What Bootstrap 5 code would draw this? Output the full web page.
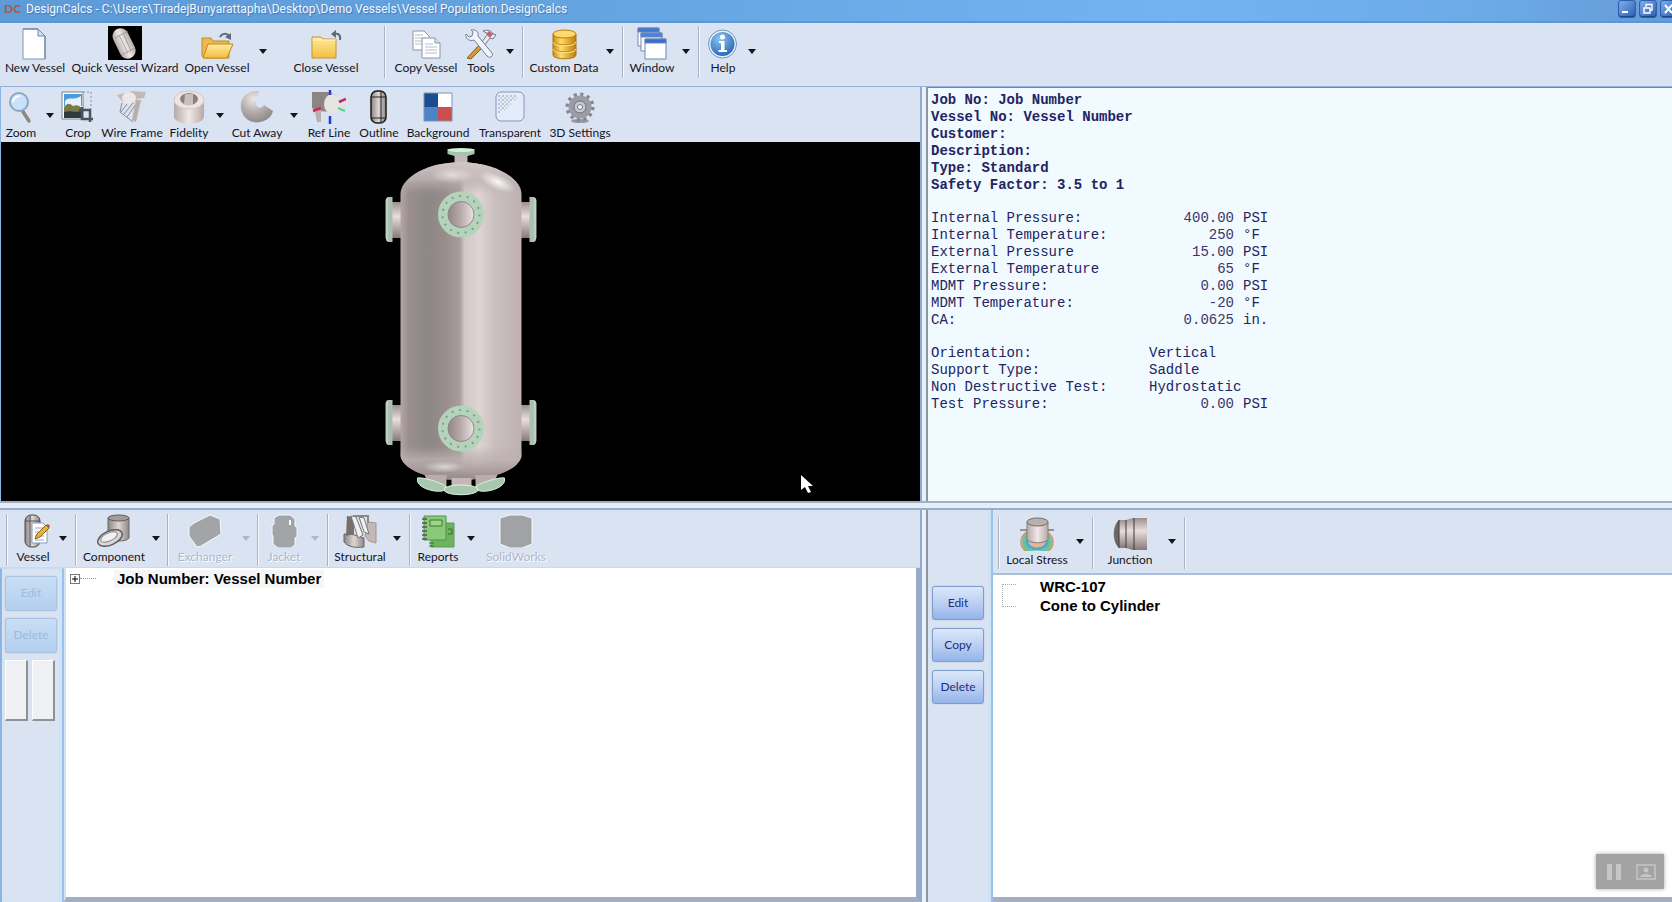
<!DOCTYPE html>
<html lang="en">
<head>
<meta charset="utf-8">
<meta name="viewport" content="width=device-width, initial-scale=1">
<title>DesignCalcs</title>
<link href="https://cdn.jsdelivr.net/npm/bootstrap@5.3.0/dist/css/bootstrap.min.css" rel="stylesheet">
<style>
  :root { --face: #dae3f1; --edge: #8eb4e3; --ink: #14141e; }
  body { font-family: Lato, "Liberation Sans", sans-serif; font-size: 12px; line-height: 14px; color: var(--ink); background: var(--face); }
  button { font: inherit; color: inherit; }

  .titlebar { height: 23px; padding-bottom: 3px; background: linear-gradient(90deg, #5d9ad8 0, #64a4e0 35%, #72b3f2 70%, #6cabe8 88%, #659bd6 100%); border-bottom: 2px solid #5b97d6; color: #f2f8ff; }
  .app-mark { width: 18px; font-weight: 900; font-size: 12px; color: #a0604c; }
  .win-title { font-family: Roboto, "Liberation Sans", sans-serif; text-shadow: 1px 1px 1px #3f78b8; }
  .win-btns { width: 54px; gap: 3px; }
  .win-btn { flex: none; width: 18px; height: 18px; border: 1px solid #2f5fae; border-radius: 3px; background: linear-gradient(135deg, #7fb0ea, #2c5cb4); box-shadow: inset 0 -1px 1px #173f8e; }

  .tools { display: grid; align-items: start; justify-content: start; background: var(--face); }
  .tools-main { height: 63px; padding: 2px 0 0 1px; border-top: 1px solid #cfeaf8;
    grid-template-columns: 68px 112px 72px 20px 106px 12px 70px 40px 18px 8px 74px 18px 8px 50px 18px 8px 40px 18px; }
  .tools-view { height: 55px; padding: 3px 0 0 0;
    grid-template-columns: 40px 18px 38px 70px 44px 18px 56px 18px 52px 48px 70px 74px 66px; }
  .tools-vessel { height: 58px; padding: 4px 0 0 2px; border-bottom: 1px solid #c3dcf4;
    grid-template-columns: 10px 42px 18px 8px 68px 16px 8px 66px 16px 8px 44px 18px 8px 56px 18px 8px 48px 18px 72px; }
  .tools-local { height: 65px; padding: 7px 0 0 2px; border-bottom: 2px solid #a9bfdc;
    grid-template-columns: 8px 68px 18px 8px 66px 18px 8px; }
  .tool { display: flex; flex-direction: column; align-items: center; gap: 2px; padding: 0; border: 0; background: none; white-space: nowrap; }
  .tools-main .tool { gap: 1px; }
  .tool svg { width: 34px; height: 34px; display: block; }
  .tool:disabled, .drop:disabled { color: #adb8ca; text-shadow: 1px 1px 0 #fff; }
  .drop { align-self: start; height: 50px; padding: 0; border: 0; background: none; display: grid; place-items: center; }
  .drop::after { content: ""; border: 4px solid transparent; border-top: 5px solid currentColor; border-bottom: 0; }
  .rule { justify-self: center; width: 2px; height: 52px; border-left: 1px solid #a9b3c4; border-right: 1px solid #f4f8fd; }

  .upper, .lower { display: grid; grid-template-columns: 920fr 8px 744fr; min-height: 0; }
  .upper { flex: 415 1 0; border-top: 1px solid #93b3dc; }
  .lower { flex: 393 1 0; border-top: 2px solid #98aeca; }
  .h-split { height: 7px; border-top: 2px solid #a6afbd; background: #e4edf8; }
  .v-split { border-left: 2px solid #8caad3; border-right: 2px solid #8c95a5; background: #e8f0fa; }
  .view-pane { border-left: 1px solid var(--edge); }
  .scene { background: #000; min-height: 0; overflow: hidden; }
  .scene .pointer { position: absolute; right: 106px; bottom: 7px; width: 14px; height: 20px; }
  .report { background: #f0faff; border-top: 1px solid #7d8590; color: #23235f; font-family: "Liberation Mono", monospace; font-size: 14px; line-height: 17px; padding: 4px 3px; overflow: hidden; }
  .report p { margin: 0; font-weight: 700; }
  .report td { padding: 0; height: 17px; white-space: pre; }
  .report .c-name { width: 218px; }
  .report .c-value { width: 85px; }
  .report .num { text-align: right; color: #40336a; }
  .report .unit { padding-left: 9px; }
  .spaced { margin-top: 16px; }

  .side { width: 64px; border-right: 2px solid #9bc0ec; box-shadow: inset -3px 0 2px #cfe3f8; }
  .side-l { padding: 7px 0 0 3px; border-top: 1px solid #c3dcf4; gap: 7px; border-left: 2px solid var(--edge); }
  .side-r { width: 65px; padding: 76px 0 0 4px; gap: 8px; }
  .cmd { width: 52px; height: 35px; padding: 0; border: 1px solid #7f9dc9; border-radius: 3px; color: #1d2f7a; background: linear-gradient(#dbe7fb 0, #bcd0f3 50%, #94b4ea 100%); box-shadow: 0 0 1px #6f8dbb; }
  .cmd:disabled { color: #9dbbdf; border-color: #a9c3e4; background: linear-gradient(#c9def5, #b3cfef); }
  .side-r .cmd { height: 34px; }
  .blank { width: 23px; height: 61px; padding: 0; background: #f0f1f4; border: 1px solid #fff; border-right: 2px solid #8e9196; border-bottom: 2px solid #8e9196; }
  .tree { background: #fff; font-family: "Liberation Sans", sans-serif; font-size: 15px; line-height: 18px; font-weight: 700; color: #000; border-bottom: 5px solid #a3b0c4; }
  .tree-l { border-left: 2px solid #cfe3f8; border-right: 4px solid #98abc6; padding: 2px 0 0 4px; }
  .tree-r { padding: 2px 0 0 9px; line-height: 19px; }
  .expander { width: 10px; height: 10px; padding: 0; border: 1px solid #777; background: #fff; display: grid; place-items: center; }
  .expander svg { width: 8px; height: 8px; }
  .twig { width: 16px; margin-right: 18px; border-top: 1px dotted #999; }
  .fork { width: 14px; height: 23px; margin-top: 7px; border: 1px dotted #aaa; border-right: 0; }
  .node-name { background: #f6f6f7; padding: 0 3px; }
  .recorder { position: fixed; right: 8px; bottom: 13px; width: 68px; height: 35px; background: #a3a3a3; box-shadow: 0 0 4px #aaa; }
  .recorder button { border: 0; padding: 0; background: none; width: 28px; height: 24px; }
</style>
</head>
<body>
<svg width="0" height="0" class="position-absolute" aria-hidden="true">
  <defs>
    <linearGradient id="steel"><stop offset="0" stop-color="#8a8585"/><stop offset=".5" stop-color="#ddd6d5"/><stop offset="1" stop-color="#8f8886"/></linearGradient>
    <linearGradient id="pale"><stop offset="0" stop-color="#b5aaa8"/><stop offset=".5" stop-color="#f0e8e6"/><stop offset="1" stop-color="#b5aaa8"/></linearGradient>
    <linearGradient id="pipe" x2="0" y2="1"><stop offset="0" stop-color="#9b8f8f"/><stop offset=".4" stop-color="#e9dede"/><stop offset="1" stop-color="#857979"/></linearGradient>
    <linearGradient id="gold"><stop offset="0" stop-color="#c98b12"/><stop offset=".35" stop-color="#ffdc6a"/><stop offset="1" stop-color="#c07c08"/></linearGradient>
    <linearGradient id="folder" x2="0" y2="1"><stop offset="0" stop-color="#ffeb9c"/><stop offset="1" stop-color="#f5bd42"/></linearGradient>
    <radialGradient id="orb" cx=".4" cy=".3" r=".8"><stop offset="0" stop-color="#8fc6f5"/><stop offset="1" stop-color="#175aa8"/></radialGradient>
    <radialGradient id="ball" cx=".4" cy=".25" r=".8"><stop offset="0" stop-color="#eeeae9"/><stop offset=".5" stop-color="#b5afae"/><stop offset="1" stop-color="#8b8584"/></radialGradient>
    <linearGradient id="shell"><stop offset="0" stop-color="#b3a6a6"/><stop offset=".07" stop-color="#9a8e8e"/><stop offset=".22" stop-color="#8d8788"/><stop offset=".36" stop-color="#968c8b"/><stop offset=".49" stop-color="#a89d9c"/><stop offset=".53" stop-color="#d2c8c7"/><stop offset=".65" stop-color="#ded4d3"/><stop offset=".78" stop-color="#cabfbf"/><stop offset="1" stop-color="#bfb1b1"/></linearGradient>
    <linearGradient id="headfade" x2="0" y2="1"><stop offset="0" stop-color="#d3c7c7"/><stop offset=".55" stop-color="#c0b4b4" stop-opacity=".8"/><stop offset="1" stop-color="#b0a4a4" stop-opacity="0"/></linearGradient>
    <linearGradient id="footfade" x2="0" y2="1"><stop offset="0" stop-color="#b5a9a9" stop-opacity="0"/><stop offset=".4" stop-color="#bdb1b1" stop-opacity=".8"/><stop offset="1" stop-color="#948888"/></linearGradient>
    <radialGradient id="shine"><stop offset="0" stop-color="#fff" stop-opacity=".9"/><stop offset="1" stop-color="#fff" stop-opacity="0"/></radialGradient>
    <linearGradient id="bore"><stop offset="0" stop-color="#918786"/><stop offset=".5" stop-color="#b8acab"/><stop offset="1" stop-color="#eee4e3"/></linearGradient>
  </defs>
</svg>

<div class="vh-100 d-flex flex-column overflow-hidden">
  <header class="titlebar d-flex align-items-center flex-shrink-0 ps-1">
    <span class="app-mark me-1" aria-hidden="true">DC</span>
    <span class="win-title text-nowrap flex-grow-1">DesignCalcs - C:\Users\TiradejBunyarattapha\Desktop\Demo Vessels\Vessel Population.DesignCalcs</span>
    <div class="win-btns d-flex flex-shrink-0 overflow-hidden">
      <button class="win-btn p-0" aria-label="Minimize"><svg width="12" height="12" viewBox="0 0 12 12" class="d-block mx-auto"><path d="M1 9h6" stroke="#fff" stroke-width="2"/></svg></button>
      <button class="win-btn p-0" aria-label="Restore"><svg width="12" height="12" viewBox="0 0 12 12" class="d-block mx-auto" fill="none" stroke="#fff" stroke-width="1.4"><path d="M4 4V1.500h6V7H8"/><path d="M2 5h6v5H2z"/></svg></button>
      <button class="win-btn p-0" aria-label="Close"><svg width="12" height="12" viewBox="0 0 12 12" class="d-block mx-auto"><path d="M2 2l7 8M9 2L2 10" stroke="#fff" stroke-width="2"/></svg></button>
    </div>
  </header>

  <nav class="tools tools-main flex-shrink-0" aria-label="Main">
    <button class="tool"><svg viewBox="0 0 34 34"><path d="M5 3h15l7 7v23H5z" fill="#fff" stroke="#7f94b5"/><path d="M5 3h15l7 7v23" fill="none" stroke="#5e7699"/><path d="M20 3v7h7z" fill="#cfe0f2" stroke="#7188ab"/></svg>New Vessel</button>
    <button class="tool"><svg viewBox="0 0 34 34"><path d="M0 0h34v34H0z"/><rect x="8" y="1" width="16" height="32" rx="8" transform="rotate(-26 17 17)" fill="url(#pale)"/><path d="M7 12l13-7M14 29l13-7M15 7l8 18M11 9l9 18" stroke="#8b8b8b" stroke-opacity=".7" fill="none"/></svg>Quick Vessel Wizard</button>
    <button class="tool"><svg viewBox="0 0 34 34"><path d="M2 12h9l2 3h16v17H4L2 30z" fill="#eeb850" stroke="#c08a24"/><path d="M8 18h25l-6 14H3z" fill="url(#folder)" stroke="#c08a24"/><path d="M20 11c2-4 7-4 9-1" fill="none" stroke="#5d6a7c" stroke-width="2"/><path d="M31 7v7l-6-3z" fill="#5d6a7c"/></svg>Open Vessel</button>
    <button class="drop" aria-label="Open Vessel options"></button>
    <button class="tool"><svg viewBox="0 0 34 34"><path d="M3 11h9l2 2h13v19H3z" fill="url(#folder)" stroke="#c29334"/><path d="M3 14h24" stroke="#fff3bd"/><path d="M31 14c1-5-2-7-5-6" fill="none" stroke="#5d6a7c" stroke-width="2"/><path d="M27 4v8l-5-4z" fill="#5d6a7c"/></svg>Close Vessel</button>
    <span class="rule"></span>
    <button class="tool"><svg viewBox="0 0 34 34" stroke="#8a96a8" fill="#fff"><path d="M4 5h11l5 5v14H4z"/><path d="M6 9h8M6 12h11M6 15h11M6 18h11" stroke="#b3bcc9"/><path d="M13 12h13l5 5v15H13z"/><path d="M26 12v5h5" fill="#dfe6ef"/><path d="M16 18h8M16 21h12M16 24h12M16 27h12" stroke="#b3bcc9"/></svg>Copy Vessel</button>
    <button class="tool"><svg viewBox="0 0 34 34"><path d="M3 32L17 17l3 3L7 33z" fill="#d59a35" stroke="#8d6018"/><path d="M17 17l7-9-5-3c5-2 9 0 10 3l3 1-3 4-3-1-6 8z" fill="#e8ecf2" stroke="#6f7c90"/><path d="M22 8l3-3 4 3-3 4z" fill="#c5606a"/><path d="M2 8l3 3 3-1 1-4-2-2c5-1 8 2 7 6l14 17c2 3-2 6-5 3L10 14C5 16 1 12 2 8z" fill="#f0f4f9" stroke="#718097"/></svg>Tools</button>
    <button class="drop" aria-label="Tools options"></button>
    <span class="rule"></span>
    <button class="tool"><svg viewBox="0 0 34 34"><path d="M6 8v21c0 5 23 5 23 0V8z" fill="url(#gold)" stroke="#ad7310"/><ellipse cx="17.500" cy="8" rx="11.500" ry="4" fill="#ffd96b" stroke="#b97e17"/><path d="M6 15c0 5 23 5 23 0M6 22c0 5 23 5 23 0" fill="none" stroke="#c08420"/><path d="M6 16c0 5 23 5 23 0M6 23c0 5 23 5 23 0" fill="none" stroke="#ffe58f"/></svg>Custom Data</button>
    <button class="drop" aria-label="Custom Data options"></button>
    <span class="rule"></span>
    <button class="tool"><svg viewBox="0 0 34 34" fill="#fff" stroke="#6f87b7"><path d="M3 2h21v18H3z"/><path d="M3 2h21v4H3z" fill="#3f77d2"/><path d="M6 7h21v18H6z"/><path d="M6 7h21v4H6z" fill="#4a82da"/><path d="M10 13h21v20H10z"/><path d="M10 13h21v4H10z" fill="#356dcc"/></svg>Window</button>
    <button class="drop" aria-label="Window options"></button>
    <span class="rule"></span>
    <button class="tool"><svg viewBox="0 0 34 34"><circle cx="16.500" cy="18" r="13" fill="url(#orb)" stroke="#e9f2fb" stroke-width="2"/><circle cx="16.500" cy="18" r="14" fill="none" stroke="#6c94c4"/><circle cx="16.500" cy="11" r="2.500" fill="#fff"/><path d="M13 15h5.500v9H21v2h-8.500v-2h2.500v-7h-2z" fill="#fff"/></svg>Help</button>
    <button class="drop" aria-label="Help options"></button>
  </nav>

  <main class="flex-grow-1 d-flex flex-column overflow-hidden">
    <div class="upper">
      <section class="view-pane d-flex flex-column overflow-hidden">
        <div class="tools tools-view flex-shrink-0" role="toolbar" aria-label="View">
          <button class="tool"><svg viewBox="0 0 34 34"><path d="M18 20l7 11" stroke="#8d8882" stroke-width="3.500" stroke-linecap="round"/><circle cx="15" cy="12" r="9" fill="#c9e2fa" stroke="#8ea6c4" stroke-width="2"/><path d="M9 12c0-4 4-6 7-6" stroke="#fff" stroke-width="2" fill="none"/></svg>Zoom</button>
          <button class="drop" aria-label="Zoom options"></button>
          <button class="tool"><svg viewBox="0 0 34 34"><path d="M1 2h21v27H1z" fill="#fff" stroke="#77828f"/><path d="M3 4h18v12H3z" fill="#4c9bdd"/><path d="M4 11c4-5 8 0 16-5v10H4z" fill="#e7f2fa"/><path d="M3 17c4-4 5-4 9-1 4-2 7 0 9 2v9H3z" fill="#7c7a4d"/><path d="M3 22c6-2 10 1 18-1v7H3z" fill="#2e3b3c"/><path d="M22 2h8v17" fill="none" stroke="#8591a2" stroke-dasharray="2 2"/><path d="M21 17v12h11M18 20h11v12" fill="none" stroke="#49525f" stroke-width="2.500"/></svg>Crop</button>
          <button class="tool"><svg viewBox="0 0 34 34"><path d="M2 5l8-2 8-2 13 1-2 6-7 1-4 5-11-3z" fill="#c0b9b8"/><ellipse cx="14" cy="8" rx="7" ry="6" fill="#ece8e7"/><path d="M7 13L5 22l13 10M12 14L6 22M18 13L9 24M23 11L12 27" fill="none" stroke="#8f8989"/><path d="M21 10h5l-5 22-4-2z" fill="#b6afae"/></svg>Wire Frame</button>
          <button class="tool"><svg viewBox="0 0 34 34"><path d="M2 10v17c2 9 29 9 30 0V10z" fill="url(#pale)"/><ellipse cx="17" cy="10" rx="15" ry="9" fill="#eee4e2" stroke="#d3c9c7"/><ellipse cx="17" cy="9" rx="9" ry="6" fill="#8b7e7d"/><path d="M13 4l-1 10c3 2 6 2 9 0V4z" fill="#c9bfbe"/></svg>Fidelity</button>
          <button class="drop" aria-label="Fidelity options"></button>
          <button class="tool"><svg viewBox="0 0 34 34"><path d="M15 1C5 2 0 10 1 18c1 10 10 16 19 14 7-1 12-6 13-11l-9-6c-4 5-9 2-8-3 0-4 2-7 3-11z" fill="url(#ball)"/></svg>Cut Away</button>
          <button class="drop" aria-label="Cut Away options"></button>
          <button class="tool"><svg viewBox="0 0 34 34"><path d="M0 2h17l8 4-5 16-14-1-6-3z" fill="#8d8583"/><path d="M3 22l6-4v14H5z" fill="#b9afad"/><ellipse cx="20" cy="14" rx="8" ry="10" fill="#e7e4e4"/><path d="M18 0v5M18 26v8" stroke="#2b3ad0" stroke-width="2.500"/><path d="M1 21l8-3M27 12l7-3" stroke="#cf2552" stroke-width="2.500"/><path d="M26 18l7 3" stroke="#61d37a" stroke-width="2"/></svg>Ref Line</button>
          <button class="tool"><svg viewBox="0 0 34 34"><rect x="9" y="1" width="15" height="32" rx="6" fill="url(#steel)" stroke="#1b1b1b" stroke-width="1.500"/><path d="M9 7h15M9 28h15M19 1v32" stroke="#222" fill="none"/></svg>Outline</button>
          <button class="tool"><svg viewBox="0 0 34 34"><path d="M3 3h14v14H3z" fill="#1d4c92"/><path d="M17 3h14v14H17z" fill="#fff"/><path d="M3 17h14v14H3z" fill="#4a86c6"/><path d="M17 17h14v14H17z" fill="#c9504f"/><path d="M3 3h28v28H3z" fill="none" stroke="#7d93b3"/></svg>Background</button>
          <button class="tool"><svg viewBox="0 0 34 34"><rect x="3" y="2" width="28" height="29" rx="5" fill="#e4ecfa" stroke="#8296bb"/><path d="M5 6h20M5 10h17M5 14h13M5 18h9M5 22h4" stroke="#bcc5d3" stroke-width="2" stroke-dasharray="2 2"/><path d="M7 8h17M7 12h12M7 16h9M7 20h5" stroke="#c8d0dc" stroke-width="2" stroke-dasharray="2 2"/></svg>Transparent</button>
          <button class="tool"><svg viewBox="0 0 34 34"><ellipse cx="17" cy="31" rx="9" ry="2" fill="#9298a4"/><circle cx="17" cy="17" r="12.500" fill="none" stroke="#85858f" stroke-width="4" stroke-dasharray="3 3.540"/><circle cx="17" cy="17" r="8.500" fill="none" stroke="#9c9ca7" stroke-width="6"/><circle cx="17" cy="17" r="6" fill="#c5c7d1" stroke="#6f707c"/><circle cx="17" cy="17" r="2.500" fill="#f2f4f8" stroke="#777985"/></svg>3D Settings</button>
        </div>
        <div class="scene flex-grow-1 position-relative">
          <svg class="d-block w-100 h-100" viewBox="0 2 180 359" role="img" aria-label="Vertical pressure vessel">
            <path d="M84 12h13v14H84z" fill="#c5b9b8"/>
            <path d="M77 9h27v5l-7 2H84l-7-2z" fill="#a8c4ae"/><ellipse cx="90.500" cy="10" rx="13" ry="2" fill="#d4f0d9"/>
            <g id="nozzleL"><path d="M20 62h13v36H20z" fill="url(#pipe)"/><path d="M15 60l2-3h5v45h-5l-2-4z" fill="#aebfb1"/><path d="M16.500 58v43" stroke="#cfe9d4"/></g>
            <use href="#nozzleL" y="203"/>
            <use href="#nozzleL" transform="translate(181 0) scale(-1 1)"/>
            <use href="#nozzleL" transform="translate(181 203) scale(-1 1)"/>
            <path id="body" d="M30 54c0-13 20-31 60-32 40 1 61 19 61 32v262c-2 12-25 24-61 24s-58-12-60-24z" fill="url(#shell)"/>
            <path d="M30 54c0-13 20-31 60-32 40 1 61 19 61 32z" fill="url(#headfade)"/>
            <path d="M30 306v10c2 12 24 24 60 24s59-12 61-24v-10z" fill="url(#footfade)"/>
            <ellipse cx="82" cy="35" rx="22" ry="8" fill="url(#shine)" opacity=".6"/>
            <ellipse cx="127" cy="42" rx="20" ry="8" transform="rotate(25 127 42)" fill="url(#shine)"/>
            <ellipse cx="74" cy="327" rx="22" ry="6" fill="url(#shine)" opacity=".6"/>
            <path d="M54 335h22v12H60zM105 335h22l-6 12h-16z" fill="#b9adac"/>
            <g fill="#a9c6af" stroke="#d8efdc"><path d="M47 338c5-1 22 4 28 8v4c-9 4-27-2-28-9z"/><path d="M134 338c-5-1-22 4-28 8v4c9 4 27-2 28-9z"/></g>
            <path d="M81 338h20v12H81z" fill="#c4b7b6"/>
            <path d="M74 348c6-4 27-4 33 0v3c-4 5-29 5-33 0z" fill="#a9c6af" stroke="#ddf4e1"/>
            <g id="port"><circle cx="90.500" cy="74.500" r="18" fill="none" stroke="#b5d3bb" stroke-width="10"/><circle cx="90.500" cy="74.500" r="18.500" fill="none" stroke="#73917b" stroke-width="2" stroke-dasharray="2 5.700" opacity=".8"/><circle cx="90.500" cy="74.500" r="13" fill="url(#bore)" stroke="#8f8786"/></g>
            <use href="#port" y="214"/>
          </svg>
          <svg class="pointer" viewBox="0 0 14 20" aria-hidden="true"><path d="M1 1v15l4-3 3 6 3-1-3-6h5z" fill="#fff"/></svg>
        </div>
      </section>
      <div class="v-split"></div>
      <section class="report" aria-label="Vessel data">
        <p>Job No: Job Number</p>
        <p>Vessel No: Vessel Number</p>
        <p>Customer:</p>
        <p>Description:</p>
        <p>Type: Standard</p>
        <p>Safety Factor: 3.5 to 1</p>
        <table class="spaced">
          <tbody>
            <tr><td class="c-name">Internal Pressure:</td><td class="c-value num">400.00</td><td class="unit">PSI</td></tr>
            <tr><td>Internal Temperature:</td><td class="num">250</td><td class="unit">°F</td></tr>
            <tr><td>External Pressure</td><td class="num">15.00</td><td class="unit">PSI</td></tr>
            <tr><td>External Temperature</td><td class="num">65</td><td class="unit">°F</td></tr>
            <tr><td>MDMT Pressure:</td><td class="num">0.00</td><td class="unit">PSI</td></tr>
            <tr><td>MDMT Temperature:</td><td class="num">-20</td><td class="unit">°F</td></tr>
            <tr><td>CA:</td><td class="num">0.0625</td><td class="unit">in.</td></tr>
          </tbody>
        </table>
        <table class="spaced">
          <tbody>
            <tr><td class="c-name">Orientation:</td><td colspan="2">Vertical</td></tr>
            <tr><td>Support Type:</td><td colspan="2">Saddle</td></tr>
            <tr><td>Non Destructive Test:</td><td colspan="2">Hydrostatic</td></tr>
            <tr><td>Test Pressure:</td><td class="c-value num">0.00</td><td class="unit">PSI</td></tr>
          </tbody>
        </table>
      </section>
    </div>

    <div class="h-split flex-shrink-0"></div>

    <div class="lower">
      <section class="d-flex flex-column overflow-hidden">
        <div class="tools tools-vessel flex-shrink-0" role="toolbar" aria-label="Vessel">
          <span class="rule"></span>
          <button class="tool"><svg viewBox="0 0 34 34"><rect x="9" y="1" width="15" height="32" rx="6" fill="url(#steel)" stroke="#4a4646"/><path d="M9 7h15M14 2v30" stroke="#555"/><path d="M16 9h11l4 4v16H16z" fill="#fff" stroke="#8b9bb5"/><path d="M19 14h8M19 18h9M19 22h9M19 26h9" stroke="#8fa8d0"/><path d="M19 25l2-5 9-9 3 3-9 9z" fill="#e6b13c" stroke="#8c6310"/><path d="M30 11l2-1 2 2-1 2z" fill="#c94a4a"/></svg>Vessel</button>
          <button class="drop" aria-label="Vessel options"></button>
          <span class="rule"></span>
          <button class="tool"><svg viewBox="0 0 34 34"><path d="M11 4v20c3 4 19 4 21 0V4z" fill="url(#steel)" stroke="#6d6665"/><ellipse cx="21.500" cy="4" rx="10.500" ry="3" fill="#a59d9a" stroke="#615a59"/><ellipse cx="13" cy="24" rx="13" ry="7" transform="rotate(-24 13 24)" fill="#d9d5d7" stroke="#5f595b" stroke-width="1.500"/><ellipse cx="12" cy="23" rx="9" ry="4" transform="rotate(-24 12 23)" fill="#f0eff2" stroke="#837c7f"/></svg>Component</button>
          <button class="drop" aria-label="Component options"></button>
          <span class="rule"></span>
          <button class="tool" disabled><svg viewBox="0 0 34 34"><path d="M1 13l5-4L22 1l10 4 1 15-20 12-4 1-8-11z" fill="#a2a4a8" stroke="#f5f8fb"/></svg>Exchanger</button>
          <button class="drop" disabled aria-label="Exchanger options"></button>
          <span class="rule"></span>
          <button class="tool" disabled><svg viewBox="0 0 34 34"><path d="M7 4l5-3h11l5 4v7l2 2v8l-2 2v7l-4 3H11l-5-4v-7l-1-3v-8l2-2z" fill="#a2a4a8" stroke="#f5f8fb"/><path d="M23 6v5" stroke="#fff" stroke-width="2"/></svg>Jacket</button>
          <button class="drop" disabled aria-label="Jacket options"></button>
          <span class="rule"></span>
          <button class="tool"><svg viewBox="0 0 34 34"><path d="M1 20h7l13 4v9c-9 1-16 0-20-5z" fill="url(#steel)" stroke="#6c6461"/><path d="M25 8l8 1v20l-7-2-4-5z" fill="#c4b8b7" stroke="#a09594"/><path d="M4 2l7 1v17l-8 2z" fill="#766f6e"/><path d="M8 2l5 1 7 18-5 3zM16 3l5 1 5 16-5-2z" fill="#f1f0f1" stroke="#777"/><path d="M10 2h15v7" fill="none" stroke="#8f8786" stroke-width="2"/></svg>Structural</button>
          <button class="drop" aria-label="Structural options"></button>
          <span class="rule"></span>
          <button class="tool"><svg viewBox="0 0 34 34"><path d="M10 9h23v24H10z" fill="#70b35f" stroke="#5b9a58"/><path d="M3 2h22v24H3z" fill="#8bc877" stroke="#4e9450"/><path d="M9 6h12v6H9z" fill="#9dd68b" stroke="#3b783a"/><path d="M1 5h5M1 9h5M1 13h5M1 17h5M1 21h5M1 25h5" stroke="#4b5b4a" stroke-width="1.500"/><path d="M27 15h4v5h-4M8 29h5M8 32h5" fill="none" stroke="#356c36"/></svg>Reports</button>
          <button class="drop" aria-label="Reports options"></button>
          <button class="tool" disabled><svg viewBox="0 0 34 34"><path d="M1 4L11 1h12l10 3v26l-10 4H11L1 30z" fill="#a0a2a5" stroke="#f3f6fa"/></svg>SolidWorks</button>
        </div>
        <div class="d-flex flex-grow-1 overflow-hidden">
          <div class="side side-l d-flex flex-column flex-shrink-0">
            <button class="cmd" disabled>Edit</button>
            <button class="cmd" disabled>Delete</button>
            <div class="d-flex gap-1"><button class="blank" aria-label="Move up"></button><button class="blank" aria-label="Move down"></button></div>
          </div>
          <div class="tree tree-l flex-grow-1">
            <div class="d-flex align-items-center">
              <button class="expander" aria-label="Expand"><svg viewBox="0 0 8 8"><path d="M1 4h6M4 1v6" stroke="#000"/></svg></button><span class="twig"></span>
              <span class="node-name">Job Number: Vessel Number</span>
            </div>
          </div>
        </div>
      </section>
      <div class="v-split"></div>
      <section class="d-flex overflow-hidden">
        <div class="side side-r d-flex flex-column flex-shrink-0">
          <button class="cmd">Edit</button>
          <button class="cmd">Copy</button>
          <button class="cmd">Delete</button>
        </div>
        <div class="flex-grow-1 d-flex flex-column">
          <div class="tools tools-local flex-shrink-0" role="toolbar" aria-label="Local">
            <span class="rule"></span>
            <button class="tool"><svg viewBox="0 0 34 34"><ellipse cx="17" cy="25" rx="13" ry="11" fill="none" stroke="#6cc48a" stroke-width="4"/><ellipse cx="17" cy="25" rx="16" ry="13" fill="none" stroke="#d98e6c" stroke-width="1.500"/><ellipse cx="17" cy="25" rx="10" ry="7" fill="#e3b88f" stroke="#4aa9d8" stroke-width="3"/><path d="M7 5v17c2 5 19 5 21 0V5z" fill="url(#pale)" stroke="#8b7f7f"/><ellipse cx="17.500" cy="5" rx="10.500" ry="4" fill="#b9b0af" stroke="#776c6b"/><path d="M0 13h7M28 13h6" stroke="#444"/></svg>Local Stress</button>
            <button class="drop" aria-label="Local Stress options"></button>
            <span class="rule"></span>
            <button class="tool"><svg viewBox="0 0 34 34"><path d="M13 3l7-2h14v32H20l-7-2z" fill="url(#pipe)"/><path d="M6 3h7v28H6C-1 25-1 9 6 3z" fill="#6d6767"/><path d="M6 3h7v28H6z" fill="url(#pipe)"/><path d="M6 3v28M13 3v28M21 1v32" stroke="#3f3a3a" fill="none"/></svg>Junction</button>
            <button class="drop" aria-label="Junction options"></button>
            <span class="rule"></span>
          </div>
          <div class="tree tree-r flex-grow-1">
            <div class="d-flex gap-4">
              <span class="fork"></span>
              <ul class="list-unstyled m-0">
                <li>WRC-107</li>
                <li>Cone to Cylinder</li>
              </ul>
            </div>
          </div>
        </div>
      </section>
    </div>
  </main>
</div>

<div class="recorder d-flex align-items-center justify-content-center gap-1">
  <button aria-label="Pause"><svg width="16" height="16" viewBox="0 0 16 16"><path d="M1 0h5v16H1zM10 0h5v16h-5z" fill="#c6c6c6"/></svg></button>
  <button aria-label="Show presenter"><svg width="20" height="16" viewBox="0 0 20 16"><path d="M1 1h18v14H1z" fill="none" stroke="#c6c6c6" stroke-width="1.500"/><circle cx="10" cy="6" r="2.500" fill="#c6c6c6"/><path d="M4 13c1-4 11-4 12 0z" fill="#c6c6c6"/></svg></button>
</div>
<script src="https://cdn.jsdelivr.net/npm/bootstrap@5.3.0/dist/js/bootstrap.bundle.min.js"></script>
</body>
</html>
